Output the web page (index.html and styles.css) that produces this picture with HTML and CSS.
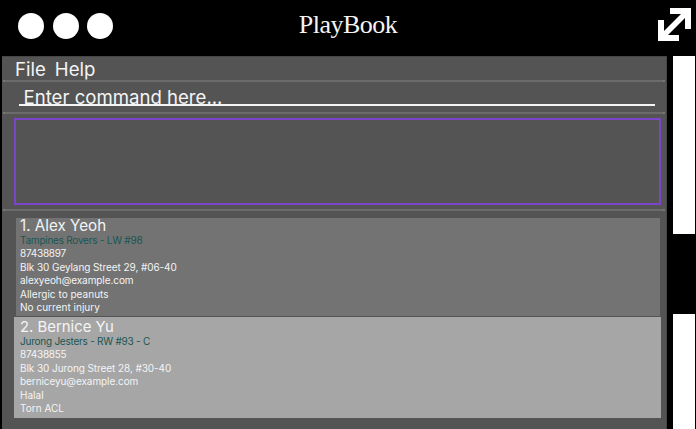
FILE: index.html
```html
<!DOCTYPE html>
<html lang="en">
<head>
<meta charset="utf-8">
<title>PlayBook</title>
<link rel="stylesheet" href="styles.css">
</head>
<body>
<header class="titlebar">
  <div class="dots"><i class="dot"></i><i class="dot"></i><i class="dot"></i></div>
  <h1 class="title">PlayBook</h1>
  <svg class="expand" width="33" height="33" viewBox="0 0 33 33" fill="none" stroke="#fff" stroke-width="6">
    <path d="M12 3H30V21M3 12V30H21"/><path d="M4 29L29 4" stroke-width="5.6"/>
  </svg>
</header>
<div class="body">
  <main class="window">
    <nav class="menu"><span>File</span><span>Help</span></nav>
    <div class="rule"></div>
    <section class="command"><div class="field">Enter command here...</div></section>
    <div class="rule"></div>
    <section class="result"></section>
    <div class="rule"></div>
    <section class="list">
      <article class="card">
        <h2 class="name">1. Alex Yeoh</h2>
        <p class="team">Tampines Rovers - LW #98</p>
        <p class="phone">87438897</p>
        <p>Blk 30 Geylang Street 29, #06-40</p>
        <p>alexyeoh@example.com</p>
        <p class="note">Allergic to peanuts</p>
        <p class="note">No current injury</p>
      </article>
      <article class="card selected">
        <h2 class="name">2. Bernice Yu</h2>
        <p class="team">Jurong Jesters - RW #93 - C</p>
        <p class="phone">87438855</p>
        <p>Blk 30 Jurong Street 28, #30-40</p>
        <p>berniceyu@example.com</p>
        <p class="note">Halal</p>
        <p class="note">Torn ACL</p>
      </article>
    </section>
  </main>
  <aside class="scroll"><div class="bar top"></div><div class="bar bottom"></div></aside>
</div>
</body>
</html>
```

FILE: styles.css
```css
* { box-sizing: border-box; margin: 0; padding: 0; }
body { width: 696px; height: 429px; overflow: hidden; background: #000; color: #f4f4f4; font-family: Inter, "Liberation Sans", sans-serif; }
.titlebar { height: 56px; display: grid; grid-template-columns: 1fr auto 1fr; align-items: start; }
.dots { display: flex; gap: 8.6px; padding: 13px 0 0 18px; }
.dot { width: 26px; height: 26px; border-radius: 50%; background: #fff; }
.title { font: 400 26px/32px "Liberation Serif", serif; padding-top: 9px; white-space: nowrap; letter-spacing: -0.5px; }
.expand { justify-self: end; margin: 8px 5px 0 0; }
.body { display: flex; height: 373px; }
.window { width: 665px; margin-left: 2px; background: #545454; border-top: 1px solid #464646; border-right: 1px solid #464646; }
.menu { height: 23px; display: flex; gap: 9px; padding-left: 13px; font-size: 18.6px; line-height: 25px; }
.rule { height: 2px; margin: 0 1px; background: #6b6b6b; border: solid #777; border-width: 0 2px; }
.command { height: 30px; padding: 3px 11px 0 17px; }
.field { height: 21px; padding-left: 4.5px; border-bottom: 2px solid #f4f4f4; font-size: 18.6px; line-height: 25px; white-space: nowrap; }
.result { height: 87px; margin: 4px 5px 4px 12px; border: 2px solid #7c45c9; }
.list { padding: 7px 5px 0 12px; }
.card { height: 98px; margin: 0 1px 1px 2px; padding: 0 0 0 4px; background: #737373; font-size: 10px; line-height: 13.4px; letter-spacing: -0.08px; white-space: nowrap; }
.selected { height: 101px; margin: 0; padding: 2px 0 0 6px; background: #a6a6a6; }
.name { font-size: 15.2px; font-weight: 400; line-height: 16px; letter-spacing: 0; }
.selected .name { font-size: 14.9px; }
.team { color: #195652; letter-spacing: -0.24px; }
.phone { letter-spacing: -0.25px; }
.note { letter-spacing: 0.02px; }
.scroll { width: 22px; margin-left: 6px; display: flex; flex-direction: column; justify-content: space-between; }
.bar { background: #fff; }
.top { height: 178px; }
.bottom { height: 115px; }
```
